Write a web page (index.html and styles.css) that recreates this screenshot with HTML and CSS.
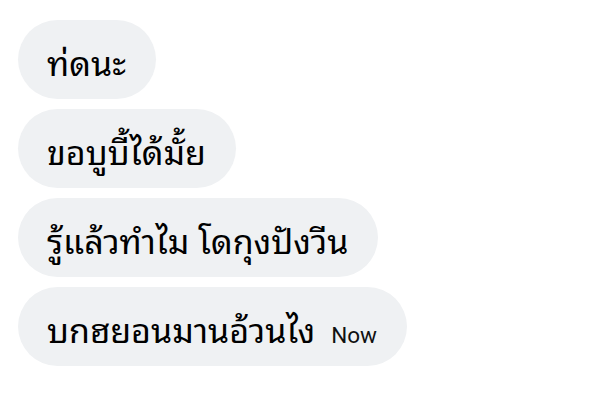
FILE: index.html
```html
<!DOCTYPE html>
<html lang="th">
<head>
<meta charset="utf-8">
<link rel="stylesheet" href="styles.css">
</head>
<body>
<div class="thread">
  <div class="bubble"><span class="msg">ท่ดนะ</span></div>
  <div class="bubble"><span class="msg">ขอบูบี้ได้มั้ย</span></div>
  <div class="bubble"><span class="msg">รู้แล้วทำไม โดกุงปังวีน</span></div>
  <div class="bubble"><span class="msg">บกฮยอนมานอ้วนไง</span><span class="time">Now</span></div>
</div>
</body>
</html>
```
FILE: styles.css
```css
html, body {
  margin: 0;
  padding: 0;
  background: #ffffff;
}
.thread {
  display: flex;
  flex-direction: column;
  align-items: flex-start;
  gap: 10px;
  padding: 20px 18px;
}
.bubble {
  display: flex;
  align-items: center;
  height: 79px;
  box-sizing: border-box;
  padding: 2px 30px 0 29px;
  border-radius: 40px;
  background: #eff1f3;
}
.msg {
  font-family: "Noto Sans Thai Looped", "Noto Sans", sans-serif;
  font-size: 34px;
  font-weight: 400;
  color: #000000;
}
.time {
  font-family: Roboto, "Noto Sans", sans-serif;
  font-size: 22.5px;
  color: #111111;
  margin-left: 16px;
  margin-top: 14px;
}
```
